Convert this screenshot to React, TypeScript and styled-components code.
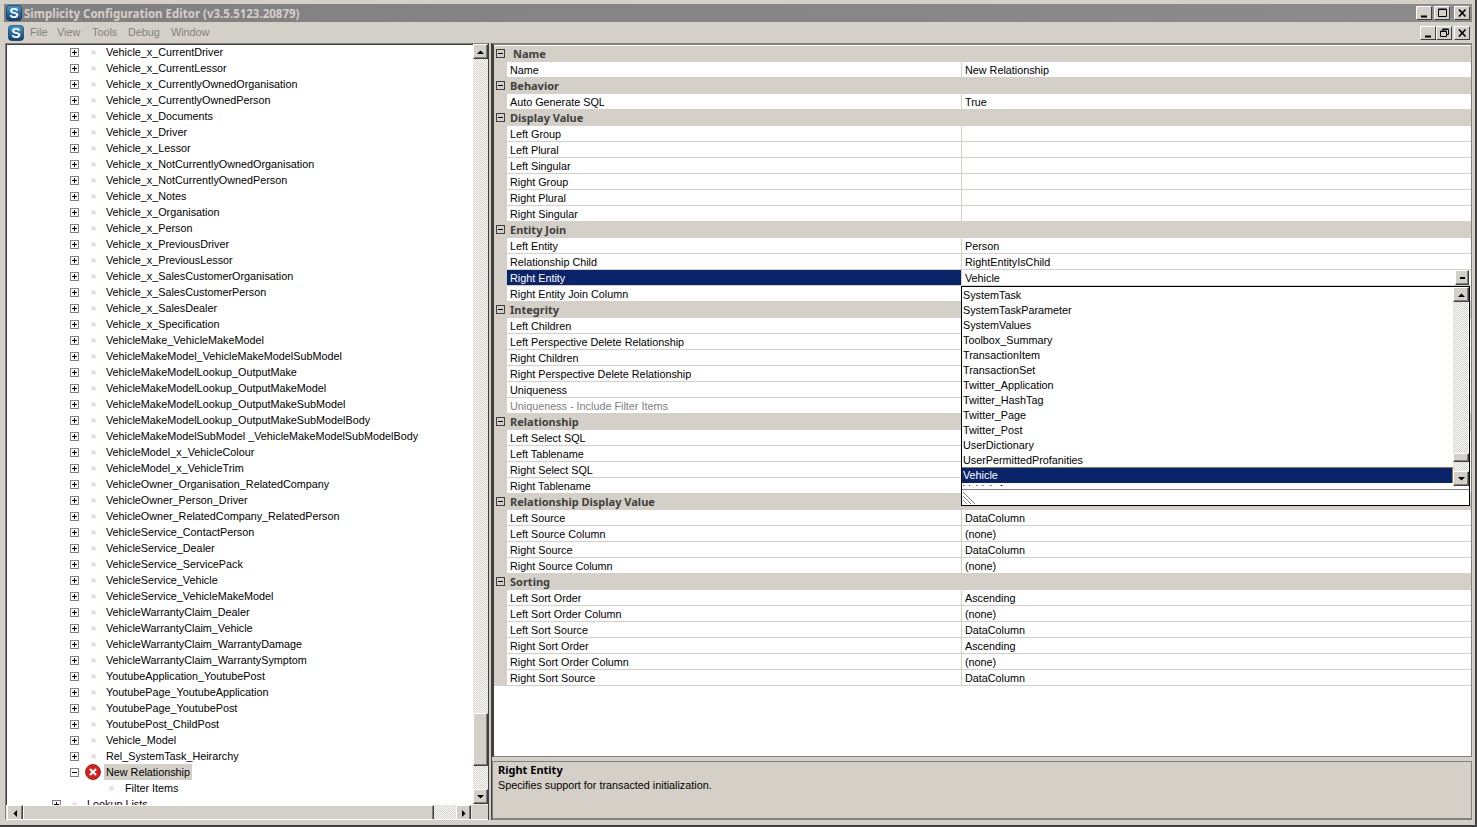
import React from "react";
import styled, { createGlobalStyle } from "styled-components";

const Global = createGlobalStyle`
  html, body { margin: 0; padding: 0; background: #d4d0c8; overflow: hidden; }
  body { font-family: "Liberation Sans", Arial, sans-serif; font-size: 10.8px; color: #000; }
`;

const Face = "#d4d0c8";
const Dither = `repeating-conic-gradient(#d4d0c8 0 25%, #ffffff 0 50%) 0 0 / 2px 2px`;

const Win = styled.div`
  position: relative;
  width: 1477px;
  height: 827px;
  box-sizing: border-box;
  padding: 4px 3px 5px 4px;
  background: ${Face};
  border-right: 2px solid #404040;
  border-bottom: 2px solid #404040;
  display: flex;
  flex-direction: column;
  overflow: hidden;
`;
const TitleBar = styled.div`
  height: 18px;
  flex: none;
  display: flex;
  align-items: center;
  background: linear-gradient(90deg, #808080, #8c8c8c);
  padding: 0 2px 0 2px;
  gap: 2px;
`;
const TitleText = styled.span`
  font-family: "Noto Sans", sans-serif;
  font-weight: 700;
  font-size: 11.5px;
  color: #d4d0c8;
  flex: 1;
  white-space: nowrap;
`;
const Menu = styled.div`
  height: 18px;
  margin-top: 2px;
  flex: none;
  display: flex;
  align-items: center;
  padding: 0 2px 0 4px;
`;
const MenuItem = styled.span<{ $w: number }>`
  position: relative;
  top: -1px;
  color: #808080;
  width: ${(p) => p.$w}px;
`;
const MenuLogo = styled.span`
  display: flex;
  margin-right: 6px;
`;
const Spacer = styled.div`
  flex: 1;
`;
const CapBtn = styled.div<{ $gap?: number }>`
  width: 16px;
  height: 14px;
  margin-left: ${(p) => p.$gap ?? 0}px;
  box-sizing: border-box;
  background: ${Face};
  border: 1px solid;
  border-color: #fff #404040 #404040 #fff;
  display: flex;
  align-items: center;
  justify-content: center;
`;
const Main = styled.div`
  flex: 1;
  margin-top: 1px;
  min-height: 0;
  display: flex;
`;
const TreePane = styled.div`
  position: relative;
  margin-left: 1px;
  width: 483px;
  flex: none;
  box-sizing: border-box;
  border: 1px solid;
  border-color: #808080 transparent #fff #808080;
  border-right: none;
  box-shadow: inset 1px 1px 0 #404040;
  background: #fff;
  overflow: hidden;
`;
const TreeList = styled.div`
  position: absolute;
  left: 0;
  top: 0;
  width: 467px;
  height: 761px;
  overflow: hidden;
`;
const TreeRow = styled.div`
  position: relative;
  height: 16px;
  line-height: 16px;
  white-space: nowrap;
`;
const Expander = styled.span<{ $x: number }>`
  position: absolute;
  left: ${(p) => p.$x}px;
  top: 4px;
  width: 9px;
  height: 9px;
  box-sizing: border-box;
  border: 1px solid #808080;
  background: #fff;
  &::before {
    content: "";
    position: absolute;
    left: 1px;
    top: 3px;
    width: 5px;
    height: 1px;
    background: #000;
  }
`;
const PlusBox = styled(Expander)`
  &::after {
    content: "";
    position: absolute;
    left: 3px;
    top: 1px;
    width: 1px;
    height: 5px;
    background: #000;
  }
`;
const Dot = styled.span<{ $x: number }>`
  position: absolute;
  left: ${(p) => p.$x}px;
  top: 6px;
  width: 5px;
  height: 5px;
  border-radius: 50%;
  background: #e6e2ea;
`;
const TreeLabel = styled.span<{ $x: number; $sel?: boolean }>`
  position: absolute;
  left: ${(p) => p.$x - 2}px;
  padding: 0 2px;
  background: ${(p) => (p.$sel ? Face : "transparent")};
`;
const ErrIcon = styled.svg`
  position: absolute;
  left: 79px;
  top: 0;
`;
const VBar = styled.div<{ $l: number; $t: number; $h: number }>`
  position: absolute;
  left: ${(p) => p.$l}px;
  top: ${(p) => p.$t}px;
  width: 15px;
  height: ${(p) => p.$h}px;
  background: ${Dither};
`;
const HBar = styled.div<{ $l: number; $t: number; $w: number }>`
  position: absolute;
  left: ${(p) => p.$l}px;
  top: ${(p) => p.$t}px;
  height: 15px;
  width: ${(p) => p.$w}px;
  background: ${Dither};
`;
const Thumb = styled.div<{ $l: number; $t: number; $w: number; $h: number }>`
  position: absolute;
  left: ${(p) => p.$l}px;
  top: ${(p) => p.$t}px;
  width: ${(p) => p.$w}px;
  height: ${(p) => p.$h}px;
  box-sizing: border-box;
  background: ${Face};
  border: 1px solid;
  border-color: #fff #404040 #404040 #fff;
  box-shadow: inset -1px -1px 0 #808080;
  display: flex;
  align-items: center;
  justify-content: center;
`;
const Corner = styled.div`
  position: absolute;
  left: 466px;
  top: 761px;
  width: 16px;
  height: 16px;
  background: ${Face};
`;
const Split = styled.div`
  width: 4px;
  flex: none;
  box-sizing: border-box;
  border-left: 1px solid #404040;
  border-right: 1px solid #404040;
  background: ${Face};
`;
const Right = styled.div`
  flex: 1;
  min-width: 0;
  display: flex;
  flex-direction: column;
`;
const Grid = styled.div`
  position: relative;
  height: 714px;
  flex: none;
  box-sizing: border-box;
  border: 1px solid;
  border-color: #808080 #808080 #808080 #404040;
  border-width: 2px 1px 1px 2px;
  padding-top: 1px;
  background: #fff;
`;
const CatRow = styled.div`
  height: 16px;
  background: ${Face};
  position: relative;
`;
const CatName = styled.span<{ $x?: number }>`
  position: absolute;
  left: ${(p) => p.$x ?? 16}px;
  top: 0;
  font-family: "Noto Sans", sans-serif;
  font-size: 11px;
  line-height: 16px;
  font-weight: 700;
  color: #404040;
`;
const GridBox = styled.span`
  position: absolute;
  left: 2px;
  top: 3px;
  width: 9px;
  height: 9px;
  box-sizing: border-box;
  border: 1px solid #404040;
  &::before {
    content: "";
    position: absolute;
    left: 1px;
    top: 3px;
    width: 5px;
    height: 1px;
    background: #000;
  }
`;
const PropRow = styled.div`
  height: 16px;
  box-sizing: border-box;
  display: flex;
  background: ${Face};
  padding-left: 13px;
`;
const NameCell = styled.div<{ $sel?: boolean; $off?: boolean }>`
  width: 455px;
  flex: none;
  box-sizing: border-box;
  padding-left: 3px;
  line-height: 17px;
  height: 16px;
  overflow: hidden;
  white-space: nowrap;
  background: ${(p) => (p.$sel ? "#0a246a" : "#fff")};
  color: ${(p) => (p.$sel ? "#fff" : p.$off ? "#808080" : "#000")};
  border-bottom: 1px solid ${Face};
  border-right: 1px solid ${Face};
`;
const ValueCell = styled.div`
  flex: 1;
  position: relative;
  box-sizing: border-box;
  padding-left: 3px;
  line-height: 17px;
  height: 16px;
  background: #fff;
  border-bottom: 1px solid ${Face};
`;
const Help = styled.div`
  flex: 1;
  margin-top: 4px;
  box-sizing: border-box;
  border: 1px solid #808080;
  border-bottom-width: 2px;
  padding: 1px 5px;
`;
const HelpTitle = styled.div`
  font-family: "Noto Sans", sans-serif;
  font-size: 11px;
  font-weight: 700;
  line-height: 14px;
  margin-bottom: 1px;
`;
const HelpText = styled.div`
  line-height: 15px;
`;
const Drop = styled.div`
  position: absolute;
  left: 961px;
  top: 286px;
  width: 509px;
  height: 220px;
  box-sizing: border-box;
  border: 1px solid #000;
  background: #fff;
  z-index: 5;
  overflow: hidden;
`;
const DropList = styled.div`
  position: absolute;
  left: 0;
  top: 0;
  width: 507px;
  height: 203px;
  box-sizing: border-box;
  overflow: hidden;
  border-bottom: 1px solid #808080;
`;
const DropItem = styled.div<{ $sel?: boolean }>`
  width: 491px;
  height: ${(p) => (p.$sel ? 16 : 15)}px;
  line-height: 17px;
  box-sizing: border-box;
  padding-left: 1px;
  white-space: nowrap;
  overflow: hidden;
  background: ${(p) => (p.$sel ? "#0a246a" : "transparent")};
  box-shadow: ${(p) => (p.$sel ? "inset 0 1px 0 #8a8052, inset -1px 0 0 #8a8052" : "none")};
  color: ${(p) => (p.$sel ? "#fff" : "#000")};
`;
const ClippedItem = styled.div`
  width: 491px;
  height: 3px;
  line-height: 12px;
  padding-left: 1px;
  overflow: hidden;
  white-space: nowrap;
`;
const Grip = styled.svg`
  position: absolute;
  left: 0;
  bottom: 0;
`;
const DropArrow = styled(Thumb)`
  position: absolute;
`;

const Tri = ({ d }: { d: "up" | "down" | "left" | "right" }) => {
  const pts = {
    up: "0,4 7,4 3.5,0.5",
    down: "0,0 7,0 3.5,3.5",
    left: "4,0 4,7 0.5,3.5",
    right: "0,0 0,7 3.5,3.5",
  }[d];
  const horiz = d === "left" || d === "right";
  return (
    <svg width={horiz ? 4 : 7} height={horiz ? 7 : 4}>
      <polygon points={pts} fill="#000" />
    </svg>
  );
};

const Logo = ({ size }: { size: number }) => (
  <svg width={size} height={size} viewBox="0 0 16 16">
    <defs>
      <linearGradient id="lg" x1="0" y1="0" x2="0" y2="1">
        <stop offset="0" stopColor="#3f9ad4" />
        <stop offset="1" stopColor="#0b3f73" />
      </linearGradient>
    </defs>
    <rect x="0.5" y="0.5" width="15" height="15" rx="3" fill="url(#lg)" stroke="#123" strokeWidth="0.6" />
    <text x="8" y="13" textAnchor="middle" fontFamily="'Liberation Sans', sans-serif" fontWeight="700" fontSize="14" fill="#fff">
      S
    </text>
  </svg>
);

const treeItems = [
  "Vehicle_x_CurrentDriver","Vehicle_x_CurrentLessor","Vehicle_x_CurrentlyOwnedOrganisation","Vehicle_x_CurrentlyOwnedPerson",
  "Vehicle_x_Documents","Vehicle_x_Driver","Vehicle_x_Lessor","Vehicle_x_NotCurrentlyOwnedOrganisation","Vehicle_x_NotCurrentlyOwnedPerson",
  "Vehicle_x_Notes","Vehicle_x_Organisation","Vehicle_x_Person","Vehicle_x_PreviousDriver","Vehicle_x_PreviousLessor",
  "Vehicle_x_SalesCustomerOrganisation","Vehicle_x_SalesCustomerPerson","Vehicle_x_SalesDealer","Vehicle_x_Specification",
  "VehicleMake_VehicleMakeModel","VehicleMakeModel_VehicleMakeModelSubModel","VehicleMakeModelLookup_OutputMake",
  "VehicleMakeModelLookup_OutputMakeModel","VehicleMakeModelLookup_OutputMakeSubModel","VehicleMakeModelLookup_OutputMakeSubModelBody",
  "VehicleMakeModelSubModel _VehicleMakeModelSubModelBody","VehicleModel_x_VehicleColour","VehicleModel_x_VehicleTrim",
  "VehicleOwner_Organisation_RelatedCompany","VehicleOwner_Person_Driver","VehicleOwner_RelatedCompany_RelatedPerson",
  "VehicleService_ContactPerson","VehicleService_Dealer","VehicleService_ServicePack","VehicleService_Vehicle",
  "VehicleService_VehicleMakeModel","VehicleWarrantyClaim_Dealer","VehicleWarrantyClaim_Vehicle","VehicleWarrantyClaim_WarrantyDamage",
  "VehicleWarrantyClaim_WarrantySymptom","YoutubeApplication_YoutubePost","YoutubePage_YoutubeApplication","YoutubePage_YoutubePost",
  "YoutubePost_ChildPost","Vehicle_Model","Rel_SystemTask_Heirarchy",
];

type G = { cat: string; x?: number; rows: [string, string?, ("sel" | "off")?][] };
const groups: G[] = [
  { cat: "Name", x: 19, rows: [["Name", "New Relationship"]] },
  { cat: "Behavior", rows: [["Auto Generate SQL", "True"]] },
  { cat: "Display Value", rows: [["Left Group"], ["Left Plural"], ["Left Singular"], ["Right Group"], ["Right Plural"], ["Right Singular"]] },
  { cat: "Entity Join", rows: [["Left Entity", "Person"], ["Relationship Child", "RightEntityIsChild"], ["Right Entity", "Vehicle", "sel"], ["Right Entity Join Column"]] },
  { cat: "Integrity", rows: [["Left Children"], ["Left Perspective Delete Relationship"], ["Right Children"], ["Right Perspective Delete Relationship"], ["Uniqueness"], ["Uniqueness - Include Filter Items", undefined, "off"]] },
  { cat: "Relationship", rows: [["Left Select SQL"], ["Left Tablename"], ["Right Select SQL"], ["Right Tablename"]] },
  { cat: "Relationship Display Value", rows: [["Left Source", "DataColumn"], ["Left Source Column", "(none)"], ["Right Source", "DataColumn"], ["Right Source Column", "(none)"]] },
  { cat: "Sorting", rows: [["Left Sort Order", "Ascending"], ["Left Sort Order Column", "(none)"], ["Left Sort Source", "DataColumn"], ["Right Sort Order", "Ascending"], ["Right Sort Order Column", "(none)"], ["Right Sort Source", "DataColumn"]] },
];

const dropItems = ["SystemTask","SystemTaskParameter","SystemValues","Toolbox_Summary","TransactionItem","TransactionSet","Twitter_Application","Twitter_HashTag","Twitter_Page","Twitter_Post","UserDictionary","UserPermittedProfanities"];

const CapIcon = ({ kind }: { kind: "min" | "max" | "restore" | "close" }) => (
  <svg width="11" height="10" viewBox="0 0 11 10" fill="none" stroke="#000">
    {kind === "min" && <path d="M2 8.5h6" strokeWidth="2" />}
    {kind === "max" && <path d="M1.5 1.5h8v7h-8zM1.5 1h8" />}
    {kind === "restore" && <path d="M3.5 2.5v-1h6v5h-2M1.5 3.5h6v5h-6zM1.5 3h6M3.5 1h6" strokeWidth="1" />}
    {kind === "close" && <path d="M2 1.5l6.5 7M8.5 1.5l-6.5 7" strokeWidth="1.6" />}
  </svg>
);

export default function App() {
  return (
    <>
      <Global />
      <Win>
        <TitleBar>
          <Logo size={16} />
          <TitleText>Simplicity Configuration Editor (v3.5.5123.20879)</TitleText>
          <CapBtn><CapIcon kind="min" /></CapBtn>
          <CapBtn><CapIcon kind="max" /></CapBtn>
          <CapBtn $gap={2}><CapIcon kind="close" /></CapBtn>
        </TitleBar>
        <Menu>
          <MenuLogo><Logo size={16} /></MenuLogo>
          <MenuItem $w={27}>File</MenuItem>
          <MenuItem $w={35}>View</MenuItem>
          <MenuItem $w={36}>Tools</MenuItem>
          <MenuItem $w={43}>Debug</MenuItem>
          <MenuItem $w={42}>Window</MenuItem>
          <Spacer />
          <CapBtn><CapIcon kind="min" /></CapBtn>
          <CapBtn><CapIcon kind="restore" /></CapBtn>
          <CapBtn $gap={2}><CapIcon kind="close" /></CapBtn>
        </Menu>
        <Main>
          <TreePane>
            <TreeList>
              {treeItems.map((t) => (
                <TreeRow key={t}>
                  <PlusBox $x={64} />
                  <Dot $x={85} />
                  <TreeLabel $x={100}>{t}</TreeLabel>
                </TreeRow>
              ))}
              <TreeRow>
                <Expander $x={64} />
                <ErrIcon width="16" height="16" viewBox="0 0 16 16">
                  <circle cx="8" cy="8" r="7.5" fill="#d81e1e" stroke="#8f1010" strokeWidth="0.8" />
                  <path d="M5 5l6 6M11 5l-6 6" stroke="#fff" strokeWidth="2.2" />
                </ErrIcon>
                <TreeLabel $x={100} $sel>New Relationship</TreeLabel>
              </TreeRow>
              <TreeRow>
                <Dot $x={103} />
                <TreeLabel $x={119}>Filter Items</TreeLabel>
              </TreeRow>
              <TreeRow>
                <PlusBox $x={46} />
                <Dot $x={66} />
                <TreeLabel $x={81}>Lookup Lists</TreeLabel>
              </TreeRow>
            </TreeList>
            <VBar $l={467} $t={0} $h={761} />
            <Thumb $l={467} $t={0} $w={15} $h={15}><Tri d="up" /></Thumb>
            <Thumb $l={467} $t={669} $w={15} $h={53} />
            <Thumb $l={467} $t={745} $w={15} $h={15}><Tri d="down" /></Thumb>
            <HBar $l={0} $t={761} $w={466} />
            <Thumb $l={1} $t={761} $w={16} $h={16}><Tri d="left" /></Thumb>
            <Thumb $l={17} $t={761} $w={411} $h={16} />
            <Thumb $l={450} $t={761} $w={15} $h={16}><Tri d="right" /></Thumb>
            <Corner />
          </TreePane>
          <Split />
          <Right>
            <Grid>
              {groups.map((g) => (
                <React.Fragment key={g.cat}>
                  <CatRow>
                    <GridBox />
                    <CatName $x={g.x}>{g.cat}</CatName>
                  </CatRow>
                  {g.rows.map(([n, v, f]) => (
                    <PropRow key={n}>
                      <NameCell $sel={f === "sel"} $off={f === "off"}>{n}</NameCell>
                      <ValueCell>
                        {v}
                        {f === "sel" && (
                          <DropArrow $l={493} $t={0} $w={14} $h={15}>
                            <svg width="5" height="2"><rect width="5" height="2" fill="#000" /></svg>
                          </DropArrow>
                        )}
                      </ValueCell>
                    </PropRow>
                  ))}
                </React.Fragment>
              ))}
            </Grid>
            <Help>
              <HelpTitle>Right Entity</HelpTitle>
              <HelpText>Specifies support for transacted initialization.</HelpText>
            </Help>
          </Right>
        </Main>
        <Drop>
          <DropList>
            {dropItems.map((d) => (
              <DropItem key={d}>{d}</DropItem>
            ))}
            <DropItem $sel>Vehicle</DropItem>
            <ClippedItem>VehicleAccessory</ClippedItem>
          </DropList>
          <VBar $l={491} $t={1} $h={198} />
          <Thumb $l={491} $t={0} $w={16} $h={15}><Tri d="up" /></Thumb>
          <Thumb $l={491} $t={166} $w={16} $h={9} />
          <Thumb $l={491} $t={184} $w={16} $h={15}><Tri d="down" /></Thumb>
          <Grip width="14" height="14" viewBox="0 0 14 14" stroke="#808080" fill="none">
            <path d="M1 1l12 12M1 5l8 8M1 9l4 4" />
          </Grip>
        </Drop>
      </Win>
    </>
  );
}
